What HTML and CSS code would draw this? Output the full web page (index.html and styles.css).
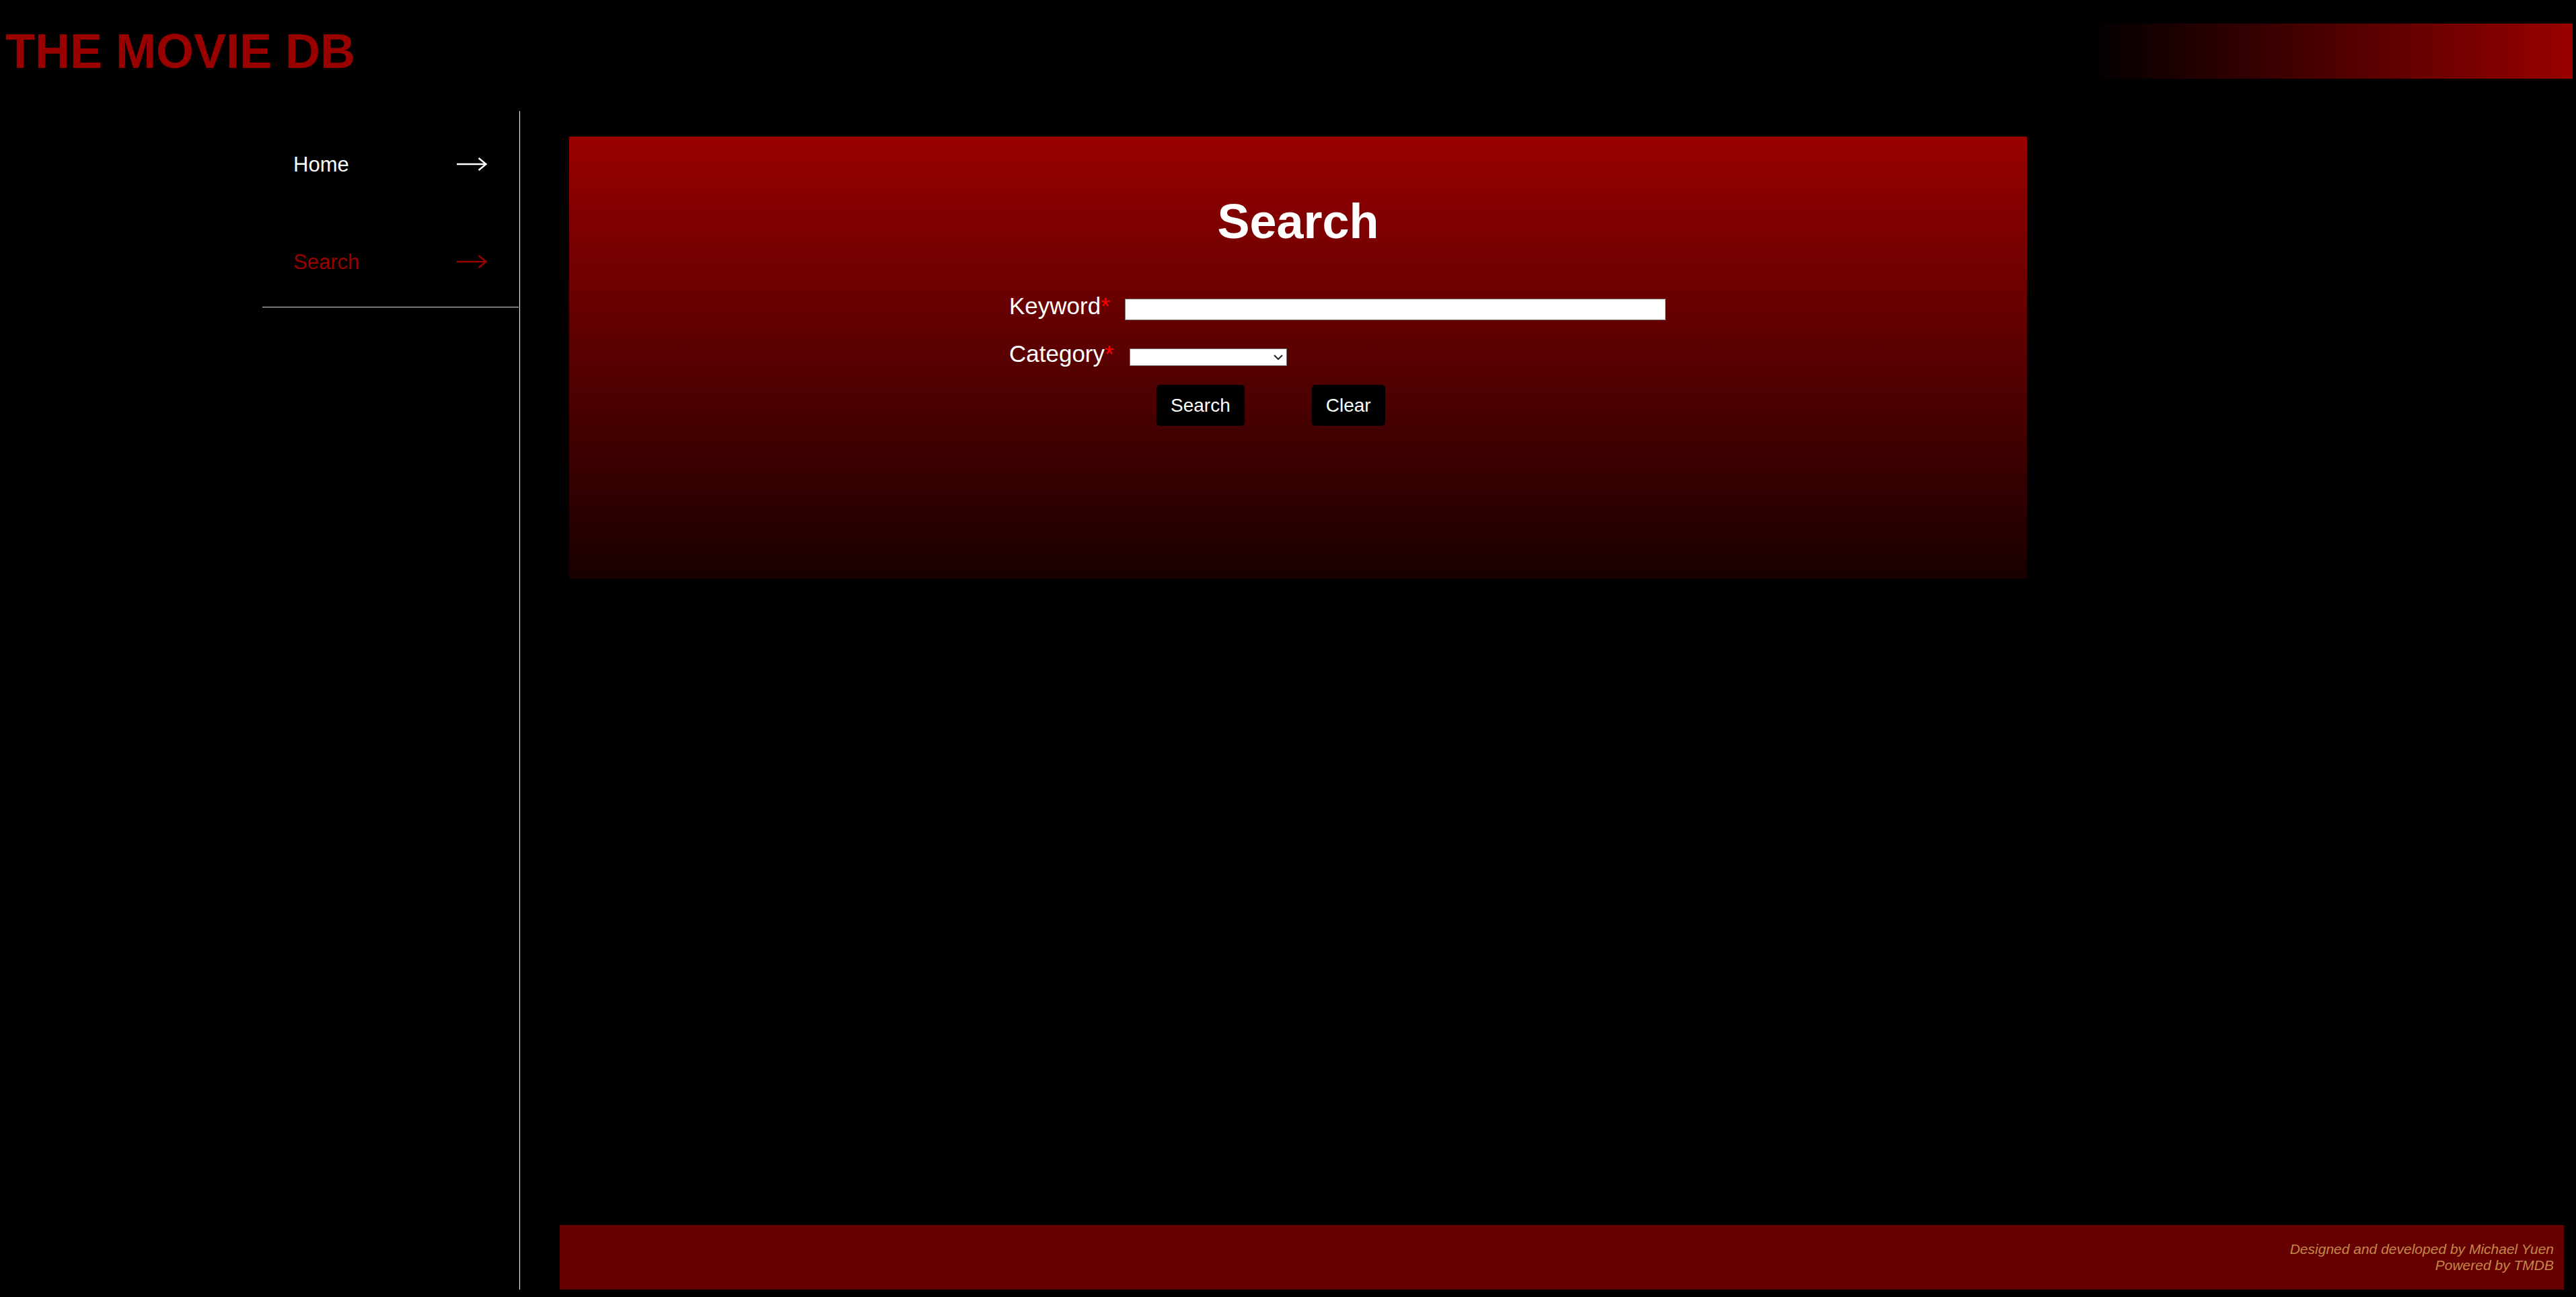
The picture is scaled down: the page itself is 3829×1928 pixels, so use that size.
FILE: index.html
```html
<!DOCTYPE html>
<html lang="en">
<head>
<meta charset="utf-8">
<title>The Movie DB</title>
<link rel="stylesheet" href="styles.css">
</head>
<body>
<header class="top">
  <h1 class="brand">THE MOVIE DB</h1>
  <div class="brand-bar"></div>
</header>
<div class="layout">
  <nav class="sidebar">
    <ul class="nav">
      <li class="nav-item">
        <a href="#" class="nav-link">Home</a>
        <svg class="nav-arrow" viewBox="0 0 45 20" width="45" height="20"><path d="M0 10 H43 M32.5 1 L43.5 10 L32.5 19" fill="none" stroke="currentColor" stroke-width="2.4"/></svg>
      </li>
      <li class="nav-item nav-item-active">
        <a href="#" class="nav-link">Search</a>
        <svg class="nav-arrow" viewBox="0 0 45 20" width="45" height="20"><path d="M0 10 H43 M32.5 1 L43.5 10 L32.5 19" fill="none" stroke="currentColor" stroke-width="2.4"/></svg>
      </li>
    </ul>
  </nav>
  <div class="content">
    <main class="panel">
      <h2 class="panel-title">Search</h2>
      <form class="search-form">
        <div class="form-row">
          <label class="form-label" for="keyword">Keyword<span class="req">*</span></label>
          <input class="keyword-input" id="keyword" type="text">
        </div>
        <div class="form-row form-row-select">
          <label class="form-label" for="category">Category<span class="req">*</span></label>
          <div class="select-wrap">
            <select class="category-select" id="category"><option></option></select>
            <svg class="select-chevron" viewBox="0 0 14 8" width="14" height="8"><path d="M1 1 L7 7 L13 1" fill="none" stroke="#222" stroke-width="2"/></svg>
          </div>
        </div>
        <div class="form-actions">
          <button type="button" class="btn">Search</button>
          <button type="button" class="btn">Clear</button>
        </div>
      </form>
    </main>
    <footer class="footer">
      <p class="footer-line">Designed and developed by Michael Yuen</p>
      <p class="footer-line">Powered by TMDB</p>
    </footer>
  </div>
</div>
</body>
</html>
```

FILE: styles.css
```css
* { box-sizing: border-box; }

html, body {
  margin: 0;
  padding: 0;
  background: #000;
}

body {
  height: 100vh;
  display: flex;
  flex-direction: column;
  font-family: "Liberation Sans", Arial, sans-serif;
  color: #fff;
  overflow: hidden;
}

.top {
  flex: none;
  display: flex;
  justify-content: space-between;
  align-items: flex-start;
  height: 117px;
  padding: 35px 5px 0 8px;
}

.brand {
  margin: 0;
  font-size: 72px;
  line-height: 82px;
  font-weight: bold;
  color: #990000;
}

.brand-bar {
  width: 724px;
  height: 82px;
  background: linear-gradient(to right, #000, #990000);
}

.layout {
  flex: 1;
  min-height: 0;
  display: flex;
  margin: 48px 18px 11px 390px;
}

.sidebar {
  flex: none;
  width: 383px;
  border-right: 1px solid #fff;
}

.nav {
  list-style: none;
  margin: 0 1px 0 0;
  padding: 0;
  border-bottom: 1px solid #ddd;
}

.nav-item {
  display: flex;
  align-items: center;
  justify-content: space-between;
  padding: 61px 47px 47px 46px;
  font-size: 31px;
  line-height: 37px;
  color: #fff;
}

.nav-item-active {
  color: #990000;
  padding-bottom: 48px;
}

.nav-link {
  color: inherit;
  text-decoration: none;
}

.nav-arrow {
  display: block;
  margin-top: -1px;
}

.content {
  flex: 1;
  display: flex;
  flex-direction: column;
}

.panel {
  width: 2167px;
  height: 657px;
  margin: 38px 0 0 73px;
  padding: 85px 0 0 654px;
  background: linear-gradient(to bottom, #990000, #180000);
}

.panel-title {
  margin: 0 0 0 -654px;
  text-align: center;
  font-size: 72px;
  line-height: 83px;
  font-weight: bold;
  color: #fff;
}

.search-form {
  margin-top: 64px;
}

.form-row {
  display: flex;
  align-items: flex-start;
}

.form-row-select {
  margin-top: 30px;
}

.form-label {
  font-size: 35px;
  line-height: 40px;
  color: #fff;
}

.req {
  color: #ff0000;
}

.keyword-input {
  margin: 9px 0 0 22px;
  width: 804px;
  height: 32px;
  border: 1px solid #767676;
  background: #fff;
  padding: 0 4px;
  font-family: "Liberation Sans", Arial, sans-serif;
  font-size: 20px;
}

.select-wrap {
  position: relative;
  margin: 12px 0 0 23px;
  width: 234px;
  height: 26px;
}

.category-select {
  appearance: none;
  -webkit-appearance: none;
  display: block;
  width: 100%;
  height: 100%;
  border: 1px solid #767676;
  border-radius: 0;
  background: #fff;
  font-family: "Liberation Sans", Arial, sans-serif;
  font-size: 16px;
}

.select-chevron {
  position: absolute;
  right: 6px;
  top: 9px;
  pointer-events: none;
}

.form-actions {
  display: flex;
  gap: 100px;
  margin: 26px 0 0 219px;
}

.btn {
  background: #000;
  color: #fff;
  border: none;
  border-radius: 5px;
  font-family: "Liberation Sans", Arial, sans-serif;
  font-size: 28px;
  line-height: 33px;
  padding: 14px 21px;
  cursor: pointer;
}

.footer {
  margin-top: auto;
  margin-left: 59px;
  height: 96px;
  padding: 0 15px;
  background: #660000;
  display: flex;
  flex-direction: column;
  justify-content: center;
  align-items: flex-end;
  font-style: italic;
  font-size: 21px;
  line-height: 24px;
  color: #c4874a;
}

.footer-line {
  margin: 0;
}
```
